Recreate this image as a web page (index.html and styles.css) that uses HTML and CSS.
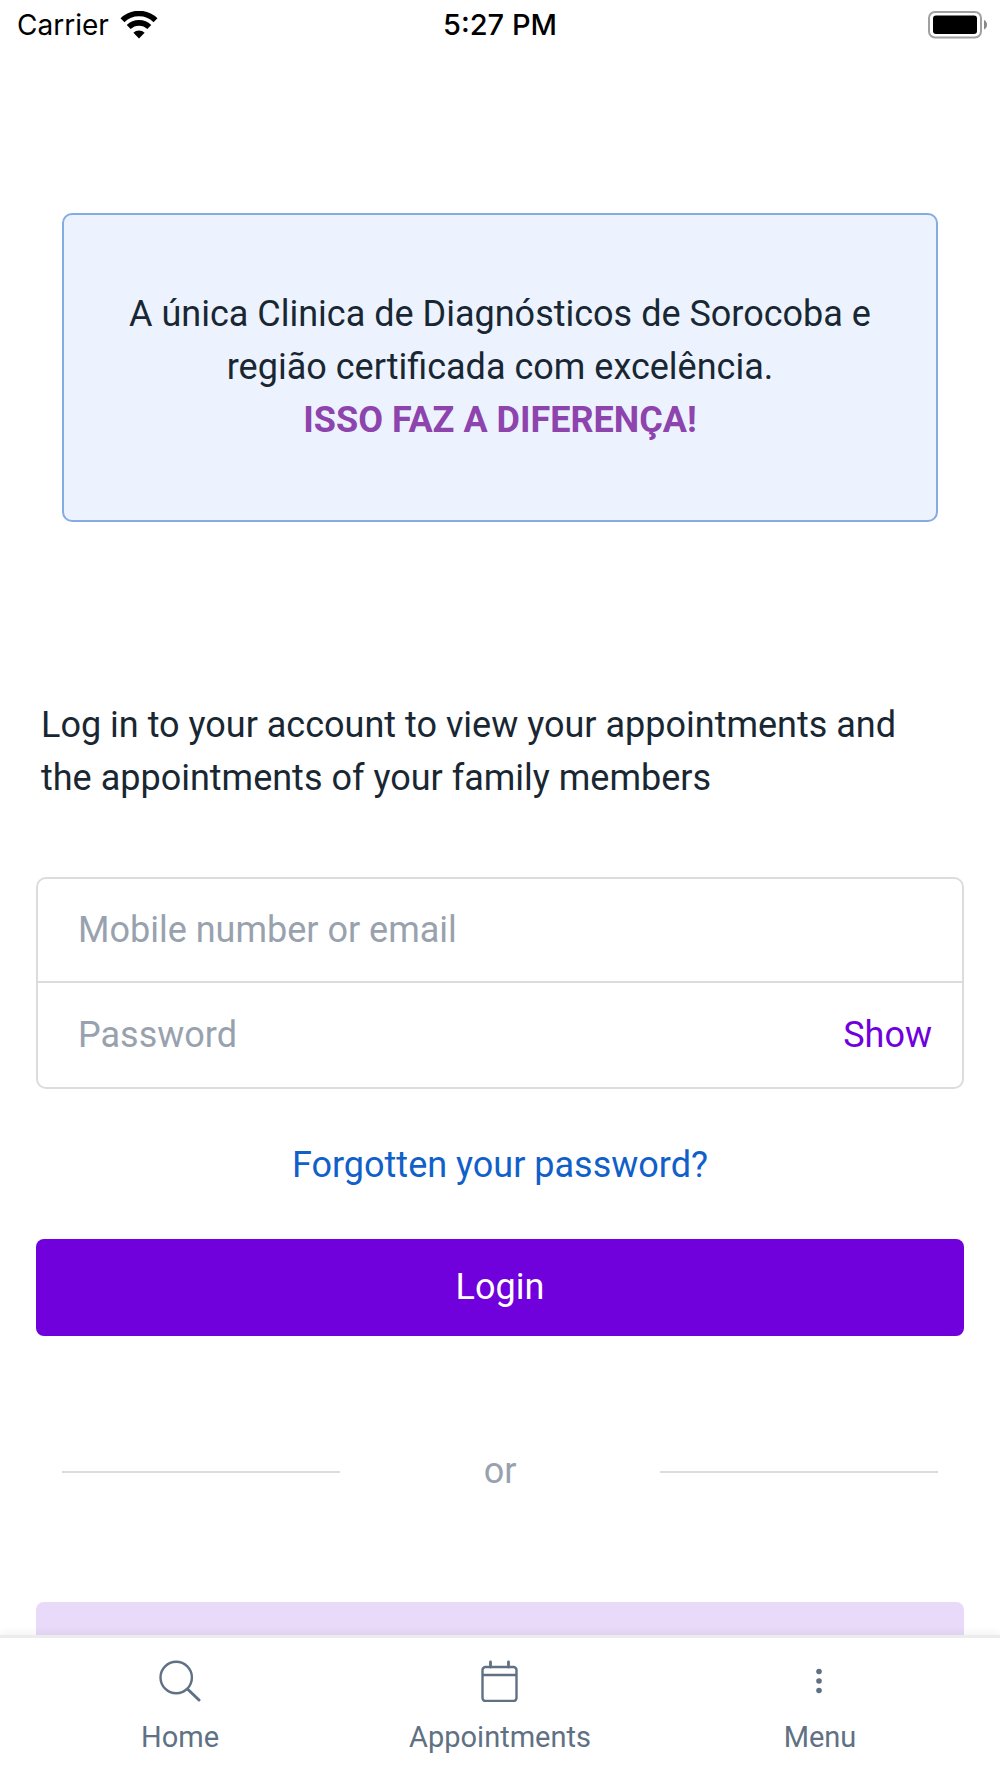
FILE: index.html
```html
<!DOCTYPE html>
<html lang="en">
<head>
<meta charset="utf-8">
<meta name="viewport" content="width=device-width, initial-scale=1">
<title>Login</title>
<link rel="stylesheet" href="styles.css">
</head>
<body>
<header class="status">
  <div class="status-left">
    <span>Carrier</span>
    <svg class="wifi" viewBox="0 0 38 28" width="38" height="28" aria-hidden="true">
      <g fill="none" stroke="#000" stroke-width="5.6">
        <path d="M2.5 9.3 A23.5 23.5 0 0 1 35.5 9.3"/>
        <path d="M8.7 16 A14.8 14.8 0 0 1 29.3 16"/>
      </g>
      <path d="M19 27.5 L13.4 21.8 A8 8 0 0 1 24.6 21.8 Z"/>
    </svg>
  </div>
  <time class="clock">5:27 PM</time>
  <svg class="battery" viewBox="0 0 60 28" width="60" height="28" aria-hidden="true">
    <rect x="1" y="1" width="52" height="25.500" rx="6" fill="none" stroke="#a0a0a0" stroke-width="2"/>
    <rect x="5" y="4.500" width="44" height="18.500" rx="3"/>
    <path d="M56 9 C60 10.500 60 17 56 18.500 Z" fill="#888"/>
  </svg>
</header>
<main class="content">
  <section class="banner">
    <p>A única Clinica de Diagnósticos de Sorocoba e região certificada com excelência.<br><strong>ISSO FAZ A DIFERENÇA!</strong></p>
  </section>
  <p class="intro">Log in to your account to view your appointments and the appointments of your family members</p>
  <form class="login">
    <div class="fields">
      <div class="field">
        <input type="text" aria-label="Mobile number or email" placeholder="Mobile number or email">
      </div>
      <div class="field">
        <input type="password" aria-label="Password" placeholder="Password">
        <button type="button" class="show">Show</button>
      </div>
    </div>
    <a class="forgot" href="#">Forgotten your password?</a>
    <button type="submit" class="button">Login</button>
  </form>
  <div class="divider"><span>or</span></div>
  <button type="button" class="button button-light" aria-label="Sign up"></button>
</main>
<nav class="tabs">
  <a href="#">
    <svg viewBox="0 0 42 42" width="42" height="42" fill="none" stroke="#5f7183" aria-hidden="true">
      <circle cx="17.200" cy="17.500" r="15.700" stroke-width="2.400"/>
      <path d="M29 29.500 L40 40" stroke-width="3" stroke-linecap="round"/>
    </svg>
    <span>Home</span>
  </a>
  <a href="#">
    <svg viewBox="0 0 42 42" width="42" height="42" fill="none" stroke="#5f7183" stroke-width="2.400" aria-hidden="true">
      <rect x="3.500" y="7" width="34" height="34" rx="3"/>
      <path d="M3.500 15 H37.500"/>
      <path d="M11.500 7 V2 M29.500 7 V2" stroke-width="2.800" stroke-linecap="round"/>
    </svg>
    <span>Appointments</span>
  </a>
  <a href="#">
    <svg viewBox="0 0 42 42" width="42" height="42" fill="#5f7183" aria-hidden="true">
      <circle cx="20" cy="11.500" r="2.800"/>
      <circle cx="20" cy="21" r="2.800"/>
      <circle cx="20" cy="30.500" r="2.800"/>
    </svg>
    <span>Menu</span>
  </a>
</nav>
</body>
</html>
```
FILE: styles.css
```css
* {
  box-sizing: border-box;
}

body {
  margin: 0;
  height: 100vh;
  display: flex;
  flex-direction: column;
  background: #fff;
  color: #192733;
  font-family: Roboto, "Liberation Sans", sans-serif;
  font-size: 36px;
  line-height: 53px;
}

p {
  margin: 0;
}

input,
button {
  font: inherit;
  border: 0;
  padding: 0;
  background: none;
}

.status {
  display: grid;
  grid-template-columns: 1fr auto 1fr;
  align-items: center;
  padding: 0 12px;
  height: 50px;
  color: #000;
  font-family: Inter, "Liberation Sans", sans-serif;
  font-size: 28px;
  line-height: 50px;
}

.status-left {
  display: flex;
  align-items: center;
  gap: 11px;
  padding-left: 5px;
}

.clock {
  font-size: 29px;
  font-weight: 500;
}

.battery {
  justify-self: end;
}

.content {
  flex: 1;
  min-height: 0;
  overflow-y: auto;
  scrollbar-width: none;
  padding: 163px 36px 36px;
}

.banner {
  margin: 0 26px;
  padding: 73px 48px;
  border: 2px solid #85abe3;
  border-radius: 10px;
  background: #ecf3fe;
  text-align: center;
}

.banner strong {
  color: #8e44ad;
  font-weight: 700;
}

.intro {
  margin: 177px 5px 72px;
  padding-right: 30px;
}

.login {
  display: flex;
  flex-direction: column;
}

.fields {
  border: 2px solid #dcdcdc;
  border-radius: 10px;
}

.field {
  display: flex;
  align-items: center;
  height: 102px;
  padding: 0 30px 0 40px;
}

.field + .field {
  border-top: 2px solid #dcdcdc;
  height: 106px;
}

.field input {
  flex: 1;
  min-width: 0;
  outline: 0;
  color: inherit;
}

.field input::placeholder {
  color: #98a2ae;
  opacity: 1;
}

.show {
  color: #7000dc;
}

.forgot {
  align-self: center;
  margin: 50px 0 47px;
  color: #1160c9;
  text-decoration: none;
}

.button {
  display: block;
  width: 100%;
  height: 97px;
  border-radius: 8px;
  background: #7000dc;
  color: #fff;
}

.button-light {
  background: #e9dafa;
}

.divider {
  display: grid;
  grid-template-columns: 1fr 320px 1fr;
  align-items: center;
  margin: 109px 26px 104px;
  color: #98a2ae;
  text-align: center;
}

.divider::before,
.divider::after {
  content: "";
  height: 2px;
  background: #dcdcdc;
}

.tabs {
  position: relative;
  display: grid;
  grid-template-columns: repeat(3, 1fr);
  padding: 22px 20px 20px;
  border-top: 3px solid #ececec;
  background: #fff;
  box-shadow: 0 -2px 8px rgba(0, 0, 0, 0.06);
}

.tabs a {
  display: flex;
  flex-direction: column;
  align-items: center;
  gap: 14px;
  color: #5f7183;
  font-size: 29px;
  line-height: 42px;
  text-decoration: none;
}
```
